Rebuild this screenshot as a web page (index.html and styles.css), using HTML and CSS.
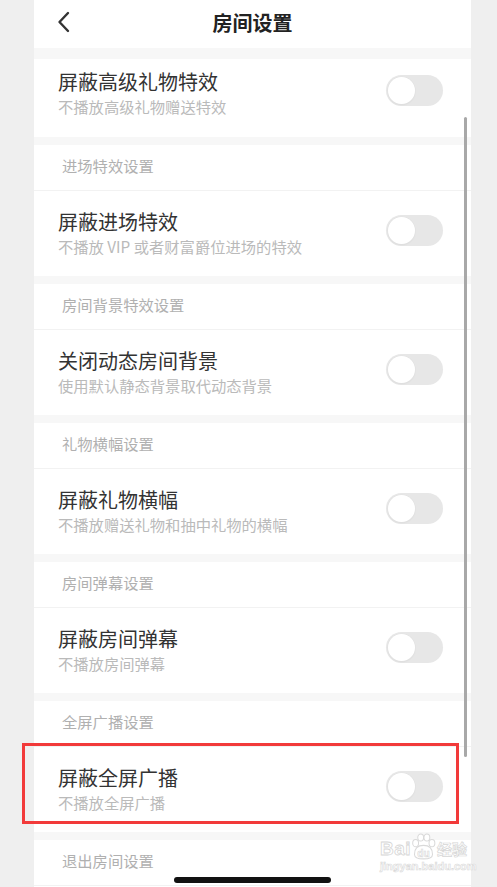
FILE: index.html
```html
<!DOCTYPE html>
<html lang="zh-CN">
<head>
<meta charset="utf-8">
<title>房间设置</title>
<link rel="stylesheet" href="styles.css">
</head>
<body>
<div class="screen">
  <div class="panel">
    <header class="topbar">
      <svg class="back" width="14" height="22" viewBox="0 0 14 22"><path d="M11 2 L2.5 11 L11 20" fill="none" stroke="#333" stroke-width="2.4" stroke-linecap="round" stroke-linejoin="round"/></svg>
      <h1 class="title">房间设置</h1>
    </header>
    <div class="band band--top"></div>

    <div class="item item--first">
      <div class="text"><div class="name">屏蔽高级礼物特效</div><div class="desc">不播放高级礼物赠送特效</div></div>
      <span class="toggle"><span class="knob"></span></span>
    </div>

    <div class="band"></div>
    <div class="section">进场特效设置</div>
    <div class="item">
      <div class="text"><div class="name">屏蔽进场特效</div><div class="desc">不播放 VIP 或者财富爵位进场的特效</div></div>
      <span class="toggle"><span class="knob"></span></span>
    </div>

    <div class="band"></div>
    <div class="section">房间背景特效设置</div>
    <div class="item">
      <div class="text"><div class="name">关闭动态房间背景</div><div class="desc">使用默认静态背景取代动态背景</div></div>
      <span class="toggle"><span class="knob"></span></span>
    </div>

    <div class="band"></div>
    <div class="section">礼物横幅设置</div>
    <div class="item">
      <div class="text"><div class="name">屏蔽礼物横幅</div><div class="desc">不播放赠送礼物和抽中礼物的横幅</div></div>
      <span class="toggle"><span class="knob"></span></span>
    </div>

    <div class="band"></div>
    <div class="section">房间弹幕设置</div>
    <div class="item">
      <div class="text"><div class="name">屏蔽房间弹幕</div><div class="desc">不播放房间弹幕</div></div>
      <span class="toggle"><span class="knob"></span></span>
    </div>

    <div class="band"></div>
    <div class="section">全屏广播设置</div>
    <div class="item">
      <div class="text"><div class="name">屏蔽全屏广播</div><div class="desc">不播放全屏广播</div></div>
      <span class="toggle"><span class="knob"></span></span>
    </div>

    <div class="band"></div>
    <div class="section">退出房间设置</div>
    <div class="item"></div>
  </div>

  <div class="scrollbar"></div>
  <div class="highlight"></div>
  <div class="watermark">
    <div class="wm-logo">
      <span class="wm-bai">Bai</span>
      <svg class="wm-paw" width="27" height="27" viewBox="0 0 24 24">
        <g fill="#fff" stroke="#d9d9d9" stroke-width="0.9">
          <ellipse cx="5" cy="9" rx="2.6" ry="3.2"/>
          <ellipse cx="9.5" cy="4" rx="2.6" ry="3.2"/>
          <ellipse cx="15" cy="4" rx="2.6" ry="3.2"/>
          <ellipse cx="19.5" cy="9" rx="2.6" ry="3.2"/>
          <path d="M4 19 C4 13 8 11 12 11 C16 11 20 13 20 19 C20 22 17 23 12 23 C7 23 4 22 4 19 Z"/>
        </g>
        <text x="12" y="21" text-anchor="middle" class="wm-du">du</text>
      </svg>
      <span class="wm-jy">经验</span>
    </div>
    <div class="wm-url">jingyan.baidu.com</div>
  </div>
  <div class="home"></div>
</div>
</body>
</html>
```
FILE: styles.css
```css
html, body {
  margin: 0;
  padding: 0;
  background: #efefef;
  overflow: hidden;
}
body {
  font-family: "Noto Sans CJK SC", "Noto Sans", sans-serif;
}
.screen {
  position: relative;
  width: 497px;
  height: 887px;
  overflow: hidden;
}
.panel {
  margin-left: 34px;
  width: 437px;
  background: #fff;
}
.topbar {
  position: relative;
  height: 48px;
  display: flex;
  align-items: center;
  justify-content: center;
}
.back {
  position: absolute;
  left: 23px;
  top: 11px;
}
.title {
  margin: 0;
  font-size: 20px;
  font-weight: 600;
  color: #222;
  line-height: 26px;
  margin-top: -2px;
}
.band {
  height: 8px;
  background: #f7f7f7;
}
.band--top {
  height: 11px;
}
.section {
  height: 46px;
  box-sizing: border-box;
  padding: 0 0 5px 28px;
  display: flex;
  align-items: center;
  font-size: 15.3px;
  color: #b0b0b0;
  border-bottom: 1px solid #f2f2f2;
}
.item {
  height: 85px;
  box-sizing: border-box;
  padding: 18px 28px 0 24px;
  display: flex;
  justify-content: space-between;
  align-items: flex-start;
}
.item--first {
  height: 78px;
  padding-top: 10px;
}
.name {
  font-size: 20px;
  line-height: 26px;
  color: #333;
}
.desc {
  margin-top: 1px;
  font-size: 15.3px;
  line-height: 21px;
  color: #bababa;
}
.toggle {
  margin-top: 6px;
  width: 57px;
  height: 31px;
  border-radius: 16px;
  background: #e7e7e7;
  position: relative;
  flex-shrink: 0;
}
.knob {
  position: absolute;
  left: 1.5px;
  top: 2px;
  width: 27px;
  height: 27px;
  border-radius: 50%;
  background: #fff;
  box-shadow: 0 0 0 0.5px #e2e2e2, 0 1px 2px rgba(0,0,0,0.06);
}
.scrollbar {
  position: absolute;
  left: 464px;
  top: 117px;
  width: 3px;
  height: 640px;
  border-radius: 2px;
  background: #a8a8a8;
}
.highlight {
  position: absolute;
  left: 22px;
  top: 743px;
  width: 437px;
  height: 81px;
  box-sizing: border-box;
  border: 3px solid #f23a3a;
}
.watermark {
  position: absolute;
  left: 380px;
  top: 830px;
  width: 92px;
  font-family: "Liberation Sans", Arial, sans-serif;
}
.wm-logo {
  display: flex;
  align-items: flex-end;
  height: 28px;
}
.wm-bai {
  font-size: 19px;
  font-weight: bold;
  color: #fff;
  -webkit-text-stroke: 0.8px #d6d6d6;
  line-height: 19px;
  letter-spacing: 0.5px;
}
.wm-paw {
  margin: 0 0 -2px -1px;
}
.wm-du {
  font-family: "Liberation Sans", Arial, sans-serif;
  font-size: 9px;
  font-weight: bold;
  fill: #fff;
  stroke: #d6d6d6;
  stroke-width: 0.5px;
}
.wm-jy {
  font-family: "Noto Sans CJK SC", sans-serif;
  font-size: 15px;
  font-weight: bold;
  color: #fff;
  -webkit-text-stroke: 0.7px #d6d6d6;
  line-height: 19px;
}
.wm-url {
  margin-top: 2px;
  font-size: 11px;
  font-weight: bold;
  color: #fff;
  -webkit-text-stroke: 0.6px #d9d9d9;
  line-height: 13px;
}
.home {
  position: absolute;
  left: 174px;
  top: 877px;
  width: 157px;
  height: 6px;
  border-radius: 3px;
  background: #111;
}
```
